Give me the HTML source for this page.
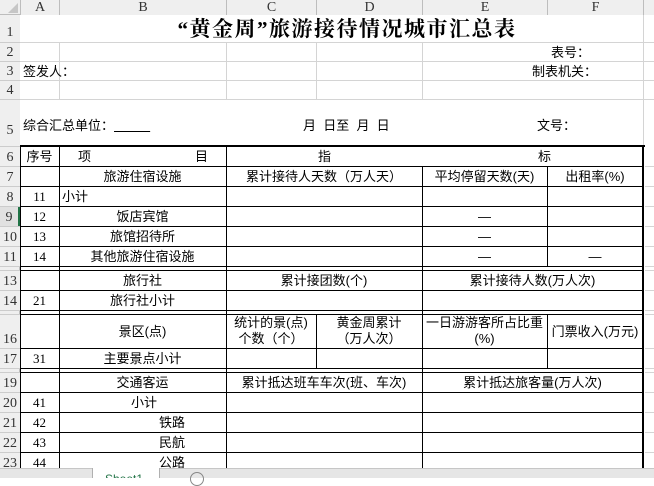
<!DOCTYPE html>
<html><head><meta charset="utf-8"><style>
*{margin:0;padding:0;box-sizing:border-box}
body{width:654px;height:478px;overflow:hidden;background:#fff;position:relative;font-family:"Liberation Sans","Noto Sans CJK SC",sans-serif;font-size:13px;color:#000}
div{position:absolute}
.hd{background:#efefef;color:#333;font-family:"Liberation Serif","Noto Serif CJK SC",serif;font-size:14px;text-align:center}
.gh{height:1px;background:#d4d4d4}
.gv{width:1px;background:#d4d4d4}
.h{height:1px;background:#000}
.v{width:1px;background:#000}
.c{text-align:center;white-space:nowrap;line-height:21px}
.n{font-family:"Liberation Serif",serif;font-size:13px}
</style></head><body>
<div class="hd" style="left:0;top:0;width:654px;height:15px;border-bottom:1px solid #bdbdbd"></div>
<div style="left:8px;top:3px;width:0;height:0;border-left:10px solid transparent;border-bottom:10px solid #c6c6c6"></div>
<div class="hd" style="left:20px;top:0;width:39px;height:15px;line-height:15px;border-left:1px solid #bdbdbd">A</div>
<div class="hd" style="left:59px;top:0;width:167px;height:15px;line-height:15px;border-left:1px solid #bdbdbd">B</div>
<div class="hd" style="left:226px;top:0;width:90px;height:15px;line-height:15px;border-left:1px solid #bdbdbd">C</div>
<div class="hd" style="left:316px;top:0;width:106px;height:15px;line-height:15px;border-left:1px solid #bdbdbd">D</div>
<div class="hd" style="left:422px;top:0;width:125px;height:15px;line-height:15px;border-left:1px solid #bdbdbd">E</div>
<div class="hd" style="left:547px;top:0;width:96px;height:15px;line-height:15px;border-left:1px solid #bdbdbd">F</div>
<div class="hd" style="left:643px;top:0;width:11px;height:15px;border-left:1px solid #bdbdbd"></div>
<div class="hd" style="left:0;top:15px;width:20px;height:453px;border-right:1px solid #bdbdbd"></div>
<div class="hd" style="left:0;top:15px;width:20px;height:27px;line-height:36px">1</div>
<div class="hd" style="left:0;top:42px;width:20px;height:19px;line-height:22px">2</div>
<div class="hd" style="left:0;top:61px;width:20px;height:19px;line-height:22px">3</div>
<div class="hd" style="left:0;top:80px;width:20px;height:19px;line-height:22px">4</div>
<div class="hd" style="left:0;top:99px;width:20px;height:47px;line-height:64px">5</div>
<div class="hd" style="left:0;top:146px;width:20px;height:20px;line-height:24px">6</div>
<div class="hd" style="left:0;top:166px;width:20px;height:20px;line-height:24px">7</div>
<div class="hd" style="left:0;top:186px;width:20px;height:20px;line-height:24px">8</div>
<div class="hd" style="left:0;top:206px;width:20px;height:20px;line-height:24px;border-right:2px solid #217346;background:#e1e1e1">9</div>
<div class="hd" style="left:0;top:226px;width:20px;height:20px;line-height:24px">10</div>
<div class="hd" style="left:0;top:246px;width:20px;height:20px;line-height:24px">11</div>
<div class="hd" style="left:0;top:270px;width:20px;height:20px;line-height:24px">13</div>
<div class="hd" style="left:0;top:290px;width:20px;height:20px;line-height:24px">14</div>
<div class="hd" style="left:0;top:314px;width:20px;height:34px;line-height:52px">16</div>
<div class="hd" style="left:0;top:348px;width:20px;height:20px;line-height:24px">17</div>
<div class="hd" style="left:0;top:372px;width:20px;height:20px;line-height:24px">19</div>
<div class="hd" style="left:0;top:392px;width:20px;height:20px;line-height:24px">20</div>
<div class="hd" style="left:0;top:412px;width:20px;height:20px;line-height:24px">21</div>
<div class="hd" style="left:0;top:432px;width:20px;height:20px;line-height:24px">22</div>
<div class="hd" style="left:0;top:452px;width:20px;height:16px;line-height:24px;overflow:hidden">23</div>
<div class="gh" style="left:0;top:42px;width:20px;background:#ccc"></div><div class="gh" style="left:0;top:61px;width:20px;background:#ccc"></div>
<div class="gh" style="left:0;top:80px;width:20px;background:#ccc"></div><div class="gh" style="left:0;top:99px;width:20px;background:#ccc"></div>
<div class="gh" style="left:0;top:146px;width:20px;background:#ccc"></div><div class="gh" style="left:0;top:166px;width:20px;background:#ccc"></div>
<div class="gh" style="left:0;top:186px;width:20px;background:#ccc"></div><div class="gh" style="left:0;top:206px;width:20px;background:#ccc"></div>
<div class="gh" style="left:0;top:226px;width:20px;background:#ccc"></div><div class="gh" style="left:0;top:246px;width:20px;background:#ccc"></div>
<div class="gh" style="left:0;top:266px;width:20px;background:#ccc"></div><div class="gh" style="left:0;top:270px;width:20px;background:#ccc"></div>
<div class="gh" style="left:0;top:290px;width:20px;background:#ccc"></div><div class="gh" style="left:0;top:310px;width:20px;background:#ccc"></div>
<div class="gh" style="left:0;top:314px;width:20px;background:#ccc"></div><div class="gh" style="left:0;top:348px;width:20px;background:#ccc"></div>
<div class="gh" style="left:0;top:368px;width:20px;background:#ccc"></div><div class="gh" style="left:0;top:372px;width:20px;background:#ccc"></div>
<div class="gh" style="left:0;top:392px;width:20px;background:#ccc"></div><div class="gh" style="left:0;top:412px;width:20px;background:#ccc"></div>
<div class="gh" style="left:0;top:432px;width:20px;background:#ccc"></div><div class="gh" style="left:0;top:452px;width:20px;background:#ccc"></div>

<div class="gh" style="left:20px;top:42px;width:634px"></div>
<div class="gh" style="left:20px;top:61px;width:634px"></div>
<div class="gh" style="left:20px;top:80px;width:634px"></div>
<div class="gh" style="left:20px;top:99px;width:634px"></div>
<div class="gv" style="left:59px;top:42px;height:57px"></div>
<div class="gv" style="left:226px;top:42px;height:57px"></div>
<div class="gv" style="left:316px;top:42px;height:57px"></div>
<div class="gv" style="left:422px;top:42px;height:57px"></div>
<div class="gv" style="left:643px;top:15px;height:131px"></div>
<div class="gh" style="left:645px;top:166px;width:9px"></div><div class="gh" style="left:645px;top:186px;width:9px"></div>
<div class="gh" style="left:645px;top:206px;width:9px"></div><div class="gh" style="left:645px;top:226px;width:9px"></div>
<div class="gh" style="left:645px;top:246px;width:9px"></div><div class="gh" style="left:645px;top:266px;width:9px"></div>
<div class="gh" style="left:645px;top:270px;width:9px"></div><div class="gh" style="left:645px;top:290px;width:9px"></div>
<div class="gh" style="left:645px;top:310px;width:9px"></div><div class="gh" style="left:645px;top:314px;width:9px"></div>
<div class="gh" style="left:645px;top:348px;width:9px"></div><div class="gh" style="left:645px;top:368px;width:9px"></div>
<div class="gh" style="left:645px;top:372px;width:9px"></div><div class="gh" style="left:645px;top:392px;width:9px"></div>
<div class="gh" style="left:645px;top:412px;width:9px"></div><div class="gh" style="left:645px;top:432px;width:9px"></div>
<div class="gh" style="left:645px;top:452px;width:9px"></div>

<div style="left:20px;top:15px;width:654px;height:27px;line-height:28px;text-align:center;font-family:'Liberation Serif','Noto Serif CJK SC',serif;font-weight:bold;font-size:21px;letter-spacing:1.5px">“黄金周”旅游接待情况城市汇总表</div>
<div class="c" style="left:500px;top:42px;width:90px;text-align:right">表号：</div>
<div class="c" style="left:23px;top:61px">签发人：</div>
<div class="c" style="left:500px;top:61px;width:97px;text-align:right">制表机关：</div>
<div class="c" style="left:23px;top:115px">综合汇总单位：<span style="text-decoration:underline">&nbsp;&nbsp;&nbsp;&nbsp;&nbsp;&nbsp;&nbsp;&nbsp;&nbsp;&nbsp;</span></div>
<div class="c" style="left:303px;top:115px">月&nbsp;&nbsp;日至&nbsp;&nbsp;月&nbsp;&nbsp;日</div>
<div class="c" style="left:537px;top:115px">文号：</div>

<div style="left:20px;top:145px;width:625px;height:2px;background:#000"></div>
<div style="left:642px;top:145px;width:2px;height:323px;background:#000"></div>
<div class="v" style="left:20px;top:146px;height:322px"></div>
<div class="h" style="left:20px;top:166px;width:623px"></div>
<div class="h" style="left:20px;top:186px;width:623px"></div>
<div class="h" style="left:20px;top:206px;width:623px"></div>
<div class="h" style="left:20px;top:226px;width:623px"></div>
<div class="h" style="left:20px;top:246px;width:623px"></div>
<div class="h" style="left:20px;top:266px;width:623px"></div>
<div class="h" style="left:20px;top:270px;width:623px"></div>
<div class="h" style="left:20px;top:290px;width:623px"></div>
<div class="h" style="left:20px;top:310px;width:623px"></div>
<div class="h" style="left:20px;top:314px;width:623px"></div>
<div class="h" style="left:20px;top:348px;width:623px"></div>
<div class="h" style="left:20px;top:368px;width:623px"></div>
<div class="h" style="left:20px;top:372px;width:623px"></div>
<div class="h" style="left:20px;top:392px;width:623px"></div>
<div class="h" style="left:20px;top:412px;width:623px"></div>
<div class="h" style="left:20px;top:432px;width:623px"></div>
<div class="h" style="left:20px;top:452px;width:623px"></div>
<div class="v" style="left:59px;top:146px;height:322px"></div>
<div class="v" style="left:226px;top:146px;height:322px"></div>
<div class="v" style="left:422px;top:166px;height:302px"></div>
<div class="v" style="left:547px;top:166px;height:100px"></div>
<div class="v" style="left:547px;top:314px;height:54px"></div>
<div class="v" style="left:316px;top:314px;height:54px"></div>

<div class="c" style="left:20px;top:146px;width:39px">序号</div>
<div class="c" style="left:78px;top:146px">项</div>
<div class="c" style="left:195px;top:146px">目</div>
<div class="c" style="left:318px;top:146px">指</div>
<div class="c" style="left:538px;top:146px">标</div>
<div class="c" style="left:59px;top:166px;width:167px">旅游住宿设施</div>
<div class="c" style="left:226px;top:166px;width:196px">累计接待人天数（万人天）</div>
<div class="c" style="left:422px;top:166px;width:125px">平均停留天数(天)</div>
<div class="c" style="left:547px;top:166px;width:96px">出租率(%)</div>
<div class="c n" style="left:20px;top:186px;width:39px">11</div>
<div class="c" style="left:62px;top:186px">小计</div>
<div class="c n" style="left:20px;top:206px;width:39px">12</div>
<div class="c" style="left:59px;top:206px;width:167px">饭店宾馆</div>
<div class="c" style="left:422px;top:206px;width:125px">—</div>
<div class="c n" style="left:20px;top:226px;width:39px">13</div>
<div class="c" style="left:59px;top:226px;width:167px">旅馆招待所</div>
<div class="c" style="left:422px;top:226px;width:125px">—</div>
<div class="c n" style="left:20px;top:246px;width:39px">14</div>
<div class="c" style="left:59px;top:246px;width:167px">其他旅游住宿设施</div>
<div class="c" style="left:422px;top:246px;width:125px">—</div>
<div class="c" style="left:547px;top:246px;width:96px">—</div>
<div class="c" style="left:59px;top:270px;width:167px">旅行社</div>
<div class="c" style="left:226px;top:270px;width:196px">累计接团数(个)</div>
<div class="c" style="left:422px;top:270px;width:221px">累计接待人数(万人次)</div>
<div class="c n" style="left:20px;top:290px;width:39px">21</div>
<div class="c" style="left:59px;top:290px;width:167px">旅行社小计</div>
<div class="c" style="left:59px;top:321px;width:167px">景区(点)</div>
<div class="c" style="left:226px;top:314px;width:90px;line-height:16px;padding-top:1px">统计的景(点)<br>个数（个）</div>
<div class="c" style="left:316px;top:314px;width:106px;line-height:16px;padding-top:1px">黄金周累计<br>（万人次）</div>
<div class="c" style="left:422px;top:314px;width:125px;line-height:16px;padding-top:1px">一日游游客所占比重<br>(%)</div>
<div class="c" style="left:547px;top:321px;width:96px">门票收入(万元)</div>
<div class="c n" style="left:20px;top:348px;width:39px">31</div>
<div class="c" style="left:59px;top:348px;width:167px">主要景点小计</div>
<div class="c" style="left:59px;top:372px;width:167px">交通客运</div>
<div class="c" style="left:226px;top:372px;width:196px">累计抵达班车车次(班、车次)</div>
<div class="c" style="left:422px;top:372px;width:221px">累计抵达旅客量(万人次)</div>
<div class="c n" style="left:20px;top:392px;width:39px">41</div>
<div class="c" style="left:131px;top:392px">小计</div>
<div class="c n" style="left:20px;top:412px;width:39px">42</div>
<div class="c" style="left:159px;top:412px">铁路</div>
<div class="c n" style="left:20px;top:432px;width:39px">43</div>
<div class="c" style="left:159px;top:432px">民航</div>
<div class="c n" style="left:20px;top:452px;width:39px">44</div>
<div class="c" style="left:159px;top:452px">公路</div>

<div style="left:0;top:468px;width:654px;height:10px;background:#e6e6e6;border-top:1px solid #c6c6c6"></div>
<div style="left:92px;top:468px;width:68px;height:10px;background:#fff;border-left:1px solid #b0b0b0;border-right:1px solid #b0b0b0;overflow:hidden"><div style="left:12px;top:4px;font-size:12px;color:#217346;line-height:14px">Sheet1</div></div>
<div style="left:190px;top:472px;width:14px;height:14px;border:1px solid #888;border-radius:50%"></div>
</body></html>
